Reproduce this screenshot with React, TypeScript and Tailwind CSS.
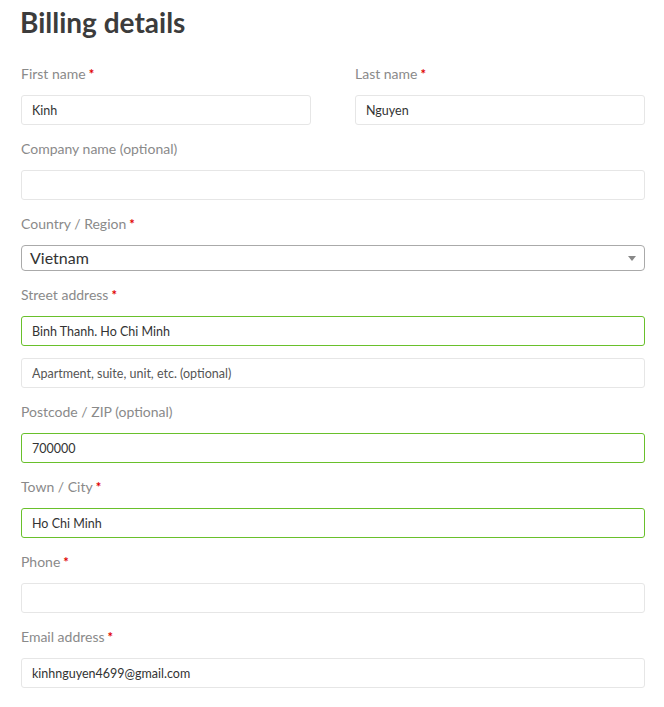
import { ChangeEvent, useState } from 'react';

type Field = {
  id: string;
  label: string;
  required?: boolean;
  value?: string;
  placeholder?: string;
  valid?: boolean;
  hideLabel?: boolean;
};

const font = { fontFamily: 'Lato, "Noto Sans", sans-serif' };

const Label = ({ text, required }: { text: string; required?: boolean }) => (
  <label className="block h-[24px] leading-[24px] text-[14px] text-[#8a8a8a] mb-[9px]">
    {text}
    {required && <span className="ml-[3px] text-[#e00000] font-bold text-[13px] align-top">*</span>}
  </label>
);

const Input = ({ field }: { field: Field }) => {
  const [value, setValue] = useState(field.value ?? '');
  return (
    <input
      value={value}
      placeholder={field.placeholder}
      onChange={(e: ChangeEvent<HTMLInputElement>) => setValue(e.target.value)}
      className={`block w-full h-[30px] px-[10px] rounded-[3px] border bg-white text-[12.5px] text-[#333] placeholder:text-[#555] outline-none ${
        field.valid ? 'border-[#69c02b]' : 'border-[#e6e6e6]'
      }`}
      style={font}
    />
  );
};

const FormRow = ({ field }: { field: Field }) => (
  <div className="mb-[12px]">
    {!field.hideLabel && <Label text={field.label} required={field.required} />}
    <Input field={field} />
  </div>
);

const App = () => {
  return (
    <div className="min-h-screen bg-white pl-[21px] pr-[19px] pt-[2px]" style={font}>
      <h1 className="text-[28px] leading-[40px] font-bold text-[#3c3c3c] -ml-[1px] mb-[20px]">Billing details</h1>

      <div className="grid grid-cols-2 gap-x-[44px]">
        <FormRow field={{ id: 'first', label: 'First name', required: true, value: 'Kinh' }} />
        <FormRow field={{ id: 'last', label: 'Last name', required: true, value: 'Nguyen' }} />
      </div>

      <FormRow field={{ id: 'company', label: 'Company name (optional)' }} />

      <div className="mb-[12px]">
        <Label text="Country / Region" required />
        <div className="relative h-[26px] rounded-[4px] border border-[#aaaaaa] flex items-center pl-[8px]">
          <span className="text-[16px] text-[#333]">Vietnam</span>
          <span className="absolute right-[8px] top-[10px] w-0 h-0 border-l-[4px] border-r-[4px] border-t-[5px] border-l-transparent border-r-transparent border-t-[#888]" />
        </div>
      </div>

      <div className="mb-[12px]">
        <Label text="Street address" required />
        <Input field={{ id: 'addr1', label: '', value: 'Binh Thanh. Ho Chi Minh', valid: true }} />
      </div>
      <FormRow field={{ id: 'addr2', label: '', hideLabel: true, placeholder: 'Apartment, suite, unit, etc. (optional)' }} />

      <FormRow field={{ id: 'postcode', label: 'Postcode / ZIP (optional)', value: '700000', valid: true }} />
      <FormRow field={{ id: 'city', label: 'Town / City', required: true, value: 'Ho Chi Minh', valid: true }} />
      <FormRow field={{ id: 'phone', label: 'Phone', required: true }} />
      <FormRow field={{ id: 'email', label: 'Email address', required: true, value: 'kinhnguyen4699@gmail.com' }} />
    </div>
  );
};

export default App;
